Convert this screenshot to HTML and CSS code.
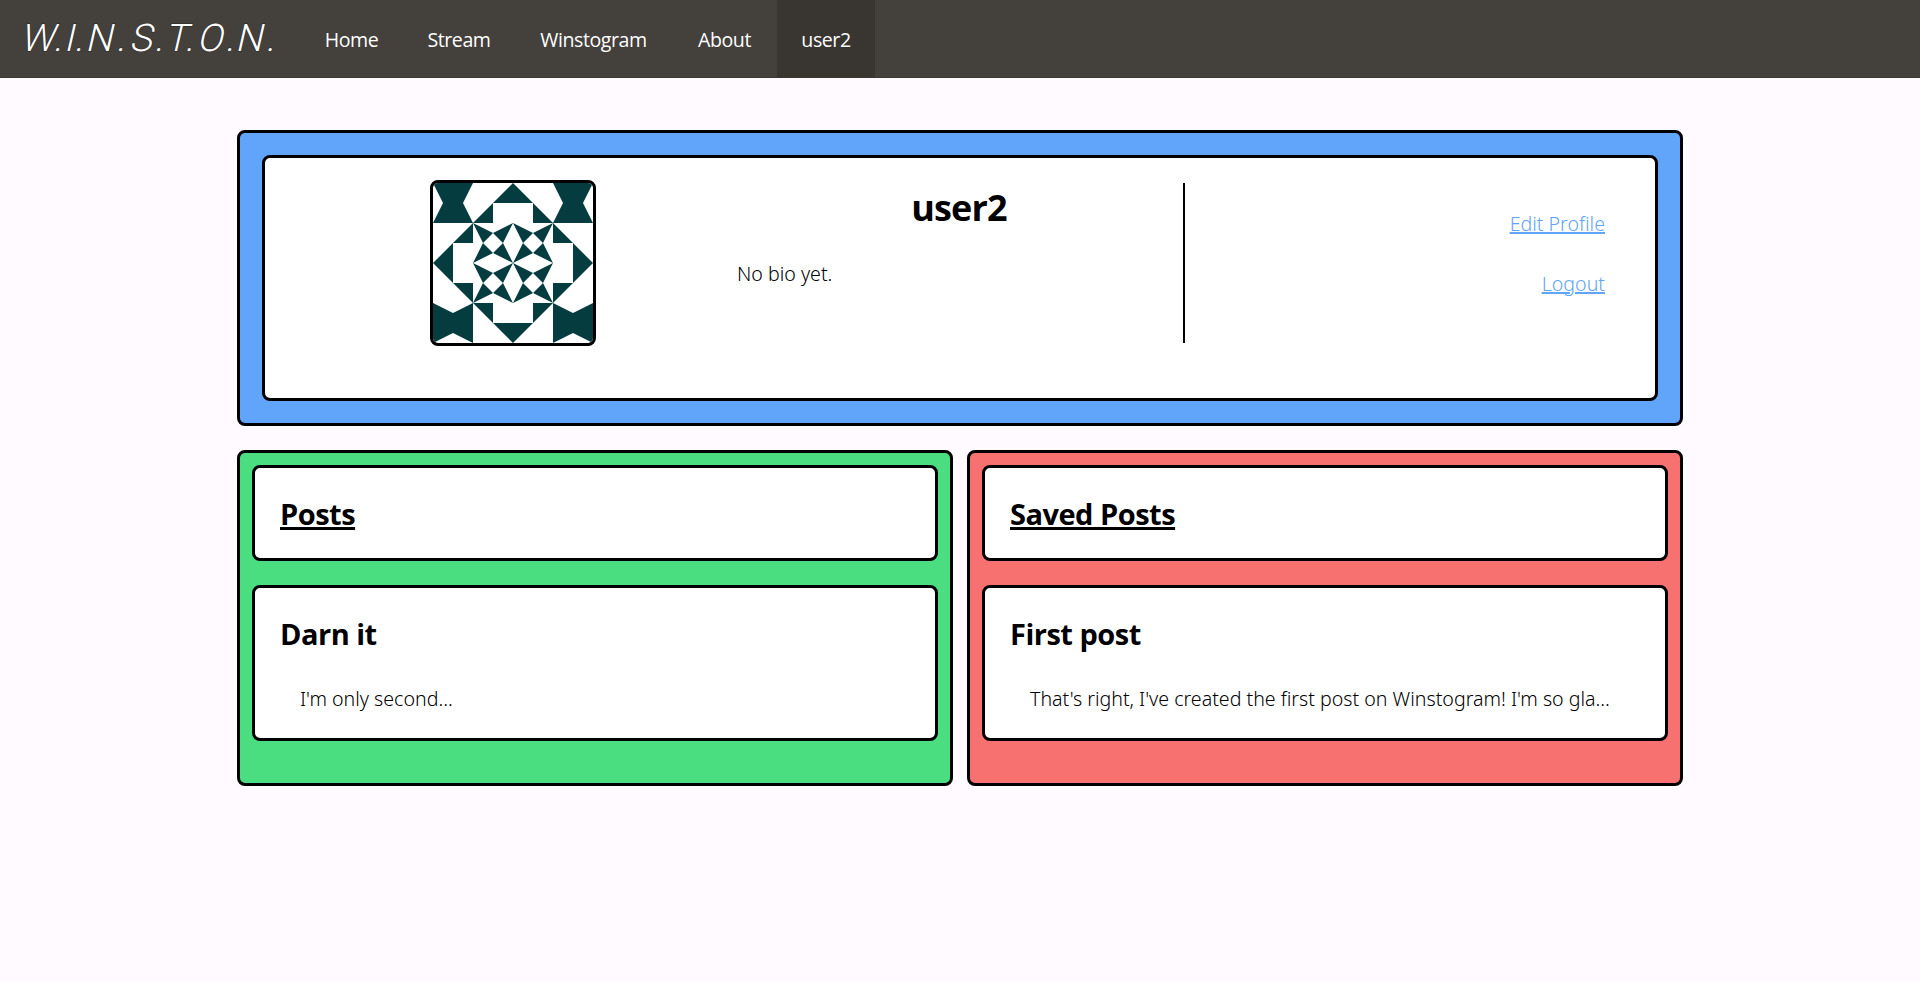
FILE: index.html
```html
<!DOCTYPE html>
<html lang="en">
<head>
<meta charset="utf-8">
<title>W.I.N.S.T.O.N. - user2</title>
<link rel="stylesheet" href="styles.css">
</head>
<body>
<nav class="navbar">
  <a class="logo" aria-label="W.I.N.S.T.O.N.">
    <svg width="300" height="78" viewBox="0 0 300 78">
      <text class="logo-text" transform="translate(0.5 51) skewX(-13)" y="0" x="19.5 52.5 63 73.5 84.5 115.5 128.5 153.5 164 184 196 224.5 234.5 265">W.I.N.S.T.O.N.</text>
    </svg>
  </a>
  <a class="nav-link home">Home</a>
  <a class="nav-link stream">Stream</a>
  <a class="nav-link winstogram">Winstogram</a>
  <a class="nav-link about">About</a>
  <a class="nav-link account active">user2</a>
</nav>
<main class="page">
  <section class="panel blue">
    <div class="card profile">
      <div class="avatar">
        <svg width="160" height="160" viewBox="0 0 160 160" fill="#053c40">
          <defs>
            <path id="edge" d="M80 0l20 20H60zM40 40l20-20v20zM120 40l-20-20v20z"/>
            <path id="tile" d="M0 0l20 10-10 10zM40 0L30 20 20 10zM0 40l10-20 10 10zM40 40L20 30l10-10z"/>
            <path id="corner" d="M0 0h40L30 20l10 20H0l10-20z"/>
            <path id="corner-side" d="M0 0l20 10L40 0v40L20 30 0 40z"/>
          </defs>
          <use href="#corner"/><use href="#corner" x="120"/>
          <use href="#corner-side" y="120"/><use href="#corner-side" x="120" y="120"/>
          <use href="#edge"/><use href="#edge" transform="rotate(90 80 80)"/>
          <use href="#edge" transform="rotate(180 80 80)"/><use href="#edge" transform="rotate(270 80 80)"/>
          <use href="#tile" x="40" y="40"/><use href="#tile" x="80" y="40"/>
          <use href="#tile" x="40" y="80"/><use href="#tile" x="80" y="80"/>
        </svg>
      </div>
      <div class="bio">
        <h1>user2</h1>
        <p>No bio yet.</p>
      </div>
      <div class="actions">
        <a>Edit Profile</a>
        <a>Logout</a>
      </div>
    </div>
  </section>
  <div class="columns">
    <section class="panel list green">
      <div class="card heading"><h2><u>Posts</u></h2></div>
      <article class="card post"><h2>Darn it</h2><p>I'm only second...</p></article>
    </section>
    <section class="panel list red">
      <div class="card heading"><h2><u>Saved Posts</u></h2></div>
      <article class="card post"><h2>First post</h2><p>That's right, I've created the first post on Winstogram! I'm so gla...</p></article>
    </section>
  </div>
</main>
</body>
</html>
```
FILE: styles.css
```css
* { box-sizing: border-box; margin: 0; padding: 0; }
body {
  background: #fffaff;
  color: #000;
  font: 340 19.6px/30px "Noto Sans", "Open Sans", sans-serif;
}
.navbar { display: flex; height: 78px; background: #44403c; box-shadow: inset 0 -1px #3b3734; }
.logo svg { display: block; }
.logo-text {
  font: 300 38px Roboto, sans-serif;
  fill: #fff;
  stroke: #292524;
  stroke-width: 1px;
  paint-order: stroke;
}
.nav-link {
  font: 400 19.6px/79px "Open Sans", sans-serif;
  letter-spacing: -0.45px;
  color: #fff;
  text-align: center;
}
.home { width: 103px; }
.stream { width: 112px; }
.winstogram { width: 157px; }
.about { width: 105px; }
.account { width: 98px; }
.active { height: 78px; background: #393531; }

.page { width: 1446px; margin: 52px auto 0; }
.panel, .card, .avatar { border: 3px solid #000; border-radius: 8px; }
.card { background: #fff; }
.blue { background: #60a5fa; height: 296px; padding: 22px; }
.green { background: #4ade80; }
.red { background: #f87171; }

.profile { height: 246px; display: flex; padding: 22px 50px 0 165px; }
.avatar { width: 166px; height: 166px; overflow: hidden; background: #fff; }
.avatar svg { display: block; }
.bio {
  width: 450px;
  height: 160px;
  margin: 3px 0 0 139px;
  border-right: 2px solid #000;
}
h1 {
  font: 700 36px/50px "Open Sans", sans-serif;
  letter-spacing: -0.9px;
  text-align: center;
}
.bio p { margin: 26px 0 0 2px; }
.actions {
  flex: 1;
  display: flex;
  flex-direction: column;
  align-items: flex-end;
  gap: 30px;
  padding-top: 29px;
}
.actions a {
  color: #60a5fa;
  text-decoration: underline;
  text-decoration-thickness: 2px;
}

.columns { display: flex; gap: 14px; margin-top: 24px; }
.list { flex: 1; height: 336px; padding: 12px; }
.heading { height: 96px; padding: 23px 25px; margin-bottom: 24px; }
.post { height: 156px; padding: 23px 25px; }
h2 {
  font: 700 29px/46px "Open Sans", sans-serif;
  letter-spacing: -0.5px;
}
h2 u { text-decoration-thickness: 3px; }
.post p { margin: 27px 0 0 20px; white-space: nowrap; }
```
